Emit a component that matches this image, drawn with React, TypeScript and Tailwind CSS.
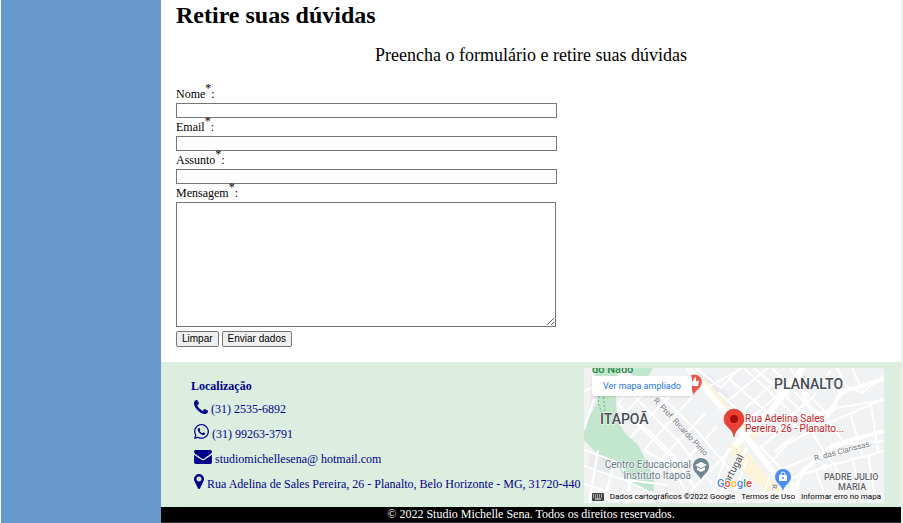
import type { ReactNode } from "react";
import { FaWhatsapp } from "react-icons/fa";

const serif = "font-['Liberation_Serif','Times_New_Roman',serif]";

function Field({ id, label, type = "text" }: { id: string; label: string; type?: string }) {
  return (
    <div>
      <FieldLabel id={id}>{label}</FieldLabel>
      <input id={id} name={id} type={type} required className="block h-[15px] w-[381px] max-w-full border border-[#767676] bg-white px-1 text-[10px]" />
    </div>
  );
}

function FieldLabel({ id, children }: { id: string; children: ReactNode }) {
  return (
    <label htmlFor={id} className="block h-[18px] text-xs leading-[18px]">
      {children}
      <sup className="text-xs leading-none">*</sup>:
    </label>
  );
}

function PhoneIcon() {
  return (
    <svg viewBox="192 128 1408 1408" className="size-3.5" fill="currentColor" aria-hidden="true">
      <path d="M1600 1240q0 27-10 70.5t-21 68.5q-21 50-122 106-94 51-186 51-27 0-53-3.5t-57.5-12.5-47-14.5-55.5-20.5-49-18q-98-35-175-83-127-79-264-216t-216-264q-48-77-83-175-3-9-18-49t-20.5-55.5-14.5-47-12.5-57.5-3.5-53q0-92 51-186 56-101 106-122 25-11 68.5-21t70.5-10q14 0 21 3 18 6 53 76 11 19 30 54t35 63.5 31 53.5q3 4 17.5 25t21.5 35.5 7 28.5q0 20-28.5 50t-62 55-62 53-28.5 46q0 9 5 22.5t8.5 20.5 14 24 11.5 19q76 137 174 235t235 174q2 1 19 11.5t24 14 20.5 8.5 22.5 5q18 0 46-28.5t53-62 55-62 50-28.5q14 0 28.5 7t35.5 21.5 25 17.5q25 15 53.5 31t63.5 35 54 30q70 35 76 53 3 7 3 21z" />
    </svg>
  );
}

function EnvelopeIcon() {
  return (
    <svg viewBox="0 256 1792 1408" className="h-3.5 w-[18px]" fill="currentColor" aria-hidden="true">
      <path d="M1792 710v794q0 66-47 113t-113 47h-1472q-66 0-113-47t-47-113v-794q44 49 101 87 362 246 497 345 57 42 92.5 65.5t94.5 48 110 24.5h2q51 0 110-24.5t94.5-48 92.5-65.5q170-123 498-345 57-39 100-87zm0-294q0 79-49 151t-122 123q-376 261-468 325-10 7-42.5 31t-54 38.5-52 32.5-57.5 27-50 9h-2q-23 0-50-9t-57.5-27-52-32.5-54-38.5-42.5-31q-91-64-262-182.5t-205-142.5q-62-42-117-115.5t-55-136.5q0-78 41.5-130t118.5-52h1472q65 0 112.5 47t47.5 113z" />
    </svg>
  );
}

function MarkerIcon() {
  return (
    <svg viewBox="384 128 1024 1536" className="h-[15px] w-2.5" fill="currentColor" aria-hidden="true">
      <path d="M1152 640q0-106-75-181t-181-75-181 75-75 181 75 181 181 75 181-75 75-181zm256 0q0 109-33 179l-364 774q-16 33-47.5 52t-67.5 19-67.5-19-46.5-52l-365-774q-33-70-33-179 0-212 150-362t362-150 362 150 150 362z" />
    </svg>
  );
}

function Contact({ icon, children }: { icon: ReactNode; children: ReactNode }) {
  return (
    <li className="flex h-[25px] items-center gap-[3px] pl-[3px] whitespace-nowrap">
      {icon}
      <span className="pt-1">{children}</span>
    </li>
  );
}

function MapDrawing() {
  return (
    <svg viewBox="0 0 300 135" className="block h-[135px] w-full font-[Roboto,sans-serif]" role="img" aria-label="Mapa da região do Planalto">
      <rect width="300" height="135" fill="#f1f2f4" />
      {/* city blocks */}
      <g fill="#e8eaed">
        <path d="M106 5l20 1 24 28-12 9zM6 85l25 9-5 15-22-9zM8 22l14-4-5 25-12-3zM10 12l12-6v10l-12 4z" />
      </g>
      {/* commercial strips */}
      <g fill="#fdf3d8">
        <path d="M112 8l8 2 50 56-8 8zM144 80l10-9 13 18 24 28-5 9-25-20zM182 112l20 2-1 11-20-4zM159 66l10-8 8 6-10 10z" />
      </g>
      {/* parks */}
      <g fill="#c3e6cf">
        <path d="M9 0h26l-4 16 2 37 9 13 12 11 8 15 8 18v18l-24-12-12-17-15-7L0 72V58l7-13 7-10V20z" />
        <path d="M44 0h25l-6 10-15-3z" />
      </g>
      <path d="M16 20l-2 15 5 13m0-23 2 18" fill="none" stroke="#5bb67c" strokeDasharray="2 2" />
      {/* minor streets */}
      <g fill="none" stroke="#fff" strokeWidth="2">
        <path d="M0 24l12-7M0 62l10-31M36 0l8 22L34 36l38 34 30 30M34 52l38-39M46 70l46-49M60 82l48-53M74 94l48-49M85 110l48-52M106 124l42-44M62 14l52 50 33 39M44 22l51 52 34 43M34 38l60 57 27 40" />
        <path d="M0 82l33 12 13 16-3 25M0 98l43 15 44 22M0 116l55 17M14 82l-9 53M30 93L20 135M61 83l26 14 22 38M43 112l40 5" />
        <path d="M112 0l25 20 19-20M124 19l34-19M134 24l40 36M142 34l42-34M155 46l43-39M161 56l44-39M144 10l50 44M160 0l47 44M170 0l51 46M188 0l38 40" />
        <path d="M187 65l41-35 17 18 13-29M176 80l30-26 18 12 28-26 48-8M228 31l19-29M253 0l10 19 15 6 22-18M268 0l12 26M206 0l20 30M187 94l17-19 31-16 65-28M176 78l29 31 8 26M200 100l62-24 38-3M190 84l20-16M208 110l33-11 59-16M220 135l-14-24M231 101l13 34M250 94l13 41M268 90l12 45M284 86l8 49M226 60l9 16 14 20M244 53l18 24M266 45l12 42M287 36l7 47M186 108l-10 27M163 91l-16 44M145 80l-20 55" />
      </g>
      {/* main roads */}
      <g fill="none" stroke="#fff">
        <path d="M104 0l56 66 53 69M150 78l37-35 18-23 14-20" strokeWidth="6" />
        <path d="M218 18q4 25 18 27 13 0 17-14 5-9 18-11l29-9M163 80l-34 55M211 125l6-20 32-28 51-14" strokeWidth="4" />
      </g>
      <circle cx="241" cy="99" r="3" fill="#fff" />
      <text x="8" y="5" fontSize="11" fontWeight="500" fill="#278743">do Nado</text>
      <g fontSize="14" fontWeight="500" fill="#484c52" stroke="#fff" strokeWidth="1" paintOrder="stroke">
        <text x="16" y="56">ITAPOÃ</text>
        <text x="190" y="21">PLANALTO</text>
      </g>
      <g fontSize="9" fontWeight="500" fill="#5f6368" stroke="#fff" strokeWidth="1" paintOrder="stroke">
        <text x="240" y="112">PADRE JULIO</text>
        <text x="254" y="122">MARIA</text>
      </g>
      <g fontSize="8" fill="#707378" stroke="#fff" strokeWidth="1" paintOrder="stroke">
        <text transform="translate(69 33) rotate(47)">R. Prof. Ricardo Pinto</text>
        <text transform="translate(231 93) rotate(-15)">R. das Clarissas</text>
        <text transform="translate(188 116) rotate(90)">R.</text>
        <text transform="translate(142 122) rotate(-62)" fontSize="10" fill="#484c52">Portugal</text>
      </g>
      <g fontSize="10" fill="#647984" stroke="#fff" strokeWidth="1" paintOrder="stroke" textAnchor="end">
        <text x="107" y="100">Centro Educacional</text>
        <text x="107" y="111">Instituto Itapoã</text>
      </g>
      {/* school */}
      <path d="M117 112c-1-5-8-7-8-14a8 8 0 0 1 16 0c0 7-7 9-8 14z" fill="#708691" />
      <path d="M111 97l6-3 6 3-6 3zM113 99v3l4 2 4-2v-3l-4 2z" fill="#fff" />
      {/* recommended place */}
      <path d="M110 27c-1-5-7-7-7-13a7 7 0 0 1 15 0c0 6-7 8-8 13z" fill="#ea5b51" />
      <path d="M107 13h2l2-4 1 1v3h3l-1 5h-5l-2-1z" fill="#fff" />
      {/* shop */}
      <path d="M199 123c-1-6-8-8-8-14a8 8 0 0 1 16 0c0 6-7 8-8 14z" fill="#4c8df6" />
      <path d="M195 107h8v6h-8z" fill="#fff" />
      <path d="M197 108v-2a2 2 0 0 1 4 0v2" fill="none" stroke="#fff" />
      <circle cx="199" cy="110" r="1" fill="#4c8df6" />
      {/* selected address */}
      <path d="M150 69c-1-9-10-10-10-18a10 10 0 0 1 20 0c0 8-9 9-10 18z" fill="#ea4335" stroke="#c5221f" strokeWidth=".5" />
      <circle cx="150" cy="51" r="4" fill="#a50e0e" />
      <g fontSize="10" fill="#c5221f" stroke="#fff" strokeWidth="1" paintOrder="stroke">
        <text x="161" y="54">Rua Adelina Sales</text>
        <text x="161" y="64">Pereira, 26 - Planalto...</text>
      </g>
      <text x="133" y="119" fontSize="11" fontWeight="500" stroke="#fff" strokeWidth="2" paintOrder="stroke">
        <tspan fill="#4285f4">G</tspan><tspan fill="#ea4335">o</tspan><tspan fill="#fbbc04">o</tspan><tspan fill="#4285f4">g</tspan><tspan fill="#34a853">l</tspan><tspan fill="#ea4335">e</tspan>
      </text>
    </svg>
  );
}

function LocationMap() {
  return (
    <div className="relative mt-1.5 mr-[17px] w-[300px] shrink-0 self-start overflow-hidden font-[Roboto,sans-serif]">
      <MapDrawing />
      <a href="#mapa" className="absolute top-2 left-2 flex h-5 w-[100px] items-center justify-center rounded-xs bg-white text-[9px] text-[#1a73e8] shadow-sm">
        Ver mapa ampliado
      </a>
      <div className="absolute right-0 bottom-0 flex h-3 items-center gap-1.5 bg-[#f5f5f5]/70 pr-[3px] text-[8px] leading-3 whitespace-nowrap text-black">
        <button type="button" aria-label="Atalhos do teclado" className="block">
          <svg viewBox="0 0 12 8" className="h-2 w-3" aria-hidden="true">
            <rect width="12" height="8" rx="1" fill="#444" />
            <path d="M1 2h10M1 4h10" stroke="#fff" strokeDasharray="1 1" />
            <path d="M3 6h6" stroke="#fff" />
          </svg>
        </button>
        <span>Dados cartográficos ©2022 Google</span>
        <a href="#termos">Termos de Uso</a>
        <a href="#erro">Informar erro no mapa</a>
      </div>
    </div>
  );
}

const buttonClass =
  "h-4 rounded-xs border border-[#767676] bg-[#efefef] px-[5px] font-['Liberation_Sans',Arial,sans-serif] text-[10px] leading-[14px]";

export default function App() {
  return (
    <div className={`flex border-r-2 border-l border-r-[#f1f1f1] border-l-white bg-white text-black ${serif}`}>
      <aside className="w-40 shrink-0 bg-[#6899cc]" />
      <div className="min-w-0 flex-1">
        <main className="px-[15px] pb-[15px]">
          <h1 className="pt-px text-2xl leading-7 font-bold">Retire suas dúvidas</h1>
          <p className="pt-4 text-center text-lg leading-5">Preencha o formulário e retire suas dúvidas</p>
          <form className="pt-5">
            <Field id="nome" label="Nome" />
            <Field id="email" label="Email" type="email" />
            <Field id="assunto" label="Assunto" />
            <FieldLabel id="mensagem">Mensagem</FieldLabel>
            <textarea id="mensagem" name="mensagem" className="block h-[125px] w-[380px] max-w-full resize border border-[#767676] bg-white p-0.5 text-[10px]" />
            <div className="flex gap-[3px] pt-1">
              <button type="reset" className={buttonClass}>Limpar</button>
              <button type="submit" className={buttonClass}>Enviar dados</button>
            </div>
          </form>
        </main>
        <footer>
          <div className="flex h-[145px] justify-between bg-[#dceee0] text-xs leading-4 text-[#00008b]">
            <address className="pt-[17px] pl-[30px] not-italic">
              <h2 className="leading-[15px] font-bold">Localização</h2>
              <ul>
                <Contact icon={<PhoneIcon />}>(31) 2535-6892</Contact>
                <Contact icon={<FaWhatsapp className="h-[17px] w-[15px]" aria-hidden="true" />}>(31) 99263-3791</Contact>
                <Contact icon={<EnvelopeIcon />}>studiomichellesena@ hotmail.com</Contact>
                <Contact icon={<MarkerIcon />}>Rua Adelina de Sales Pereira, 26 - Planalto, Belo Horizonte - MG, 31720-440</Contact>
              </ul>
            </address>
            <LocationMap />
          </div>
          <p className="border-b border-[#26323c] bg-black text-center text-xs leading-[15px] text-white">
            © 2022 Studio Michelle Sena. Todos os direitos reservados.
          </p>
        </footer>
      </div>
    </div>
  );
}
